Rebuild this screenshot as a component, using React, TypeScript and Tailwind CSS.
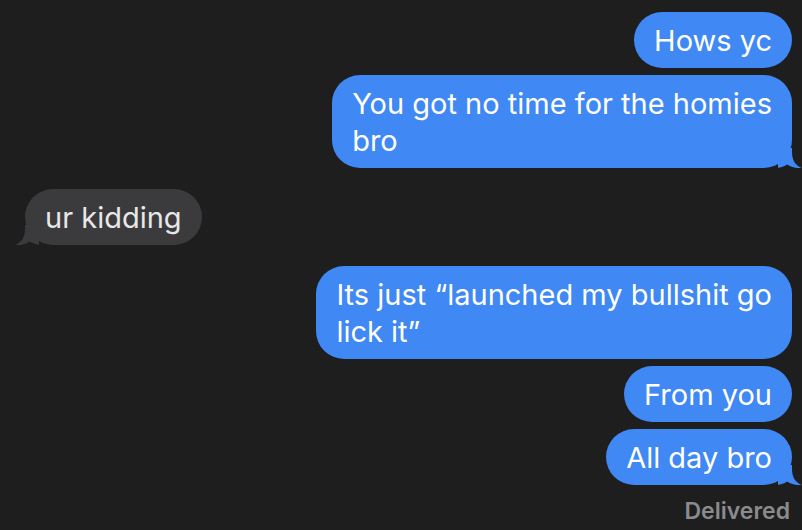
import type { ReactNode } from 'react';

const blue = '#4088f4';
const gray = '#3b3b3d';

type Msg = { text: ReactNode; me: boolean; tail?: boolean; gap: string };

// lines are broken by hand so the bubble hugs its longest line, like iMessage does
const messages: Msg[] = [
  { text: 'Hows yc', me: true, gap: 'mt-0' },
  {
    text: (
      <>
        You got no time for the homies
        <br />
        bro
      </>
    ),
    me: true,
    tail: true,
    gap: 'mt-[7px]',
  },
  { text: 'ur kidding', me: false, tail: true, gap: 'mt-[21px]' },
  {
    text: (
      <>
        Its just {'\u201c'}launched my bullshit go
        <br />
        lick it{'\u201d'}
      </>
    ),
    me: true,
    gap: 'mt-[21px]',
  },
  { text: 'From you', me: true, gap: 'mt-[7px]' },
  { text: 'All day bro', me: true, tail: true, gap: 'mt-[7px]' },
];

function Tail({ me }: { me: boolean }) {
  // little curl at the bottom corner of the last bubble in a run
  if (me) {
    return (
      <svg className="absolute -right-[10px] bottom-0" width="24" height="20" viewBox="0 0 24 20">
        <path d="M0 0 L14 0 L14 4 C14 12 17 17 23.5 20 C18 20.4 13 19.4 9 16.6 C6 18.8 3 19.6 0 19.8 Z" fill={blue} />
      </svg>
    );
  }
  return (
    <svg className="absolute -left-[10px] bottom-0" width="24" height="20" viewBox="0 0 24 20">
      <path d="M24 0 L10 0 L10 4 C10 12 7 17 0.5 20 C6 20.4 11 19.4 15 16.6 C18 18.8 21 19.6 24 19.8 Z" fill={gray} />
    </svg>
  );
}

function Bubble({ msg }: { msg: Msg }) {
  return (
    <div className={`flex ${msg.me ? 'justify-end' : 'justify-start'} ${msg.gap}`}>
      <div
        className={`relative max-w-[490px] whitespace-nowrap rounded-[28px] px-[20px] py-[9.5px] text-[29px] leading-[37px] ${
          msg.me ? 'bg-[#4088f4] text-white' : 'bg-[#3b3b3d] text-[#e8e8e8]'
        }`}
      >
        {msg.tail && <Tail me={msg.me} />}
        <span className="relative">{msg.text}</span>
      </div>
    </div>
  );
}

export default function App() {
  return (
    <div
      className="w-[802px] h-[530px] overflow-hidden bg-[#1e1e1e] pt-3 pl-[25px] pr-[10px]"
      style={{ fontFamily: 'Inter, "Noto Sans", sans-serif' }}
    >
      {messages.map((m, i) => (
        <Bubble key={i} msg={m} />
      ))}
      <div className="mt-[13px] flex justify-end pr-[2px] text-[23px] font-semibold leading-[26px] text-[#8b8b8e]">
        Delivered
      </div>
    </div>
  );
}
